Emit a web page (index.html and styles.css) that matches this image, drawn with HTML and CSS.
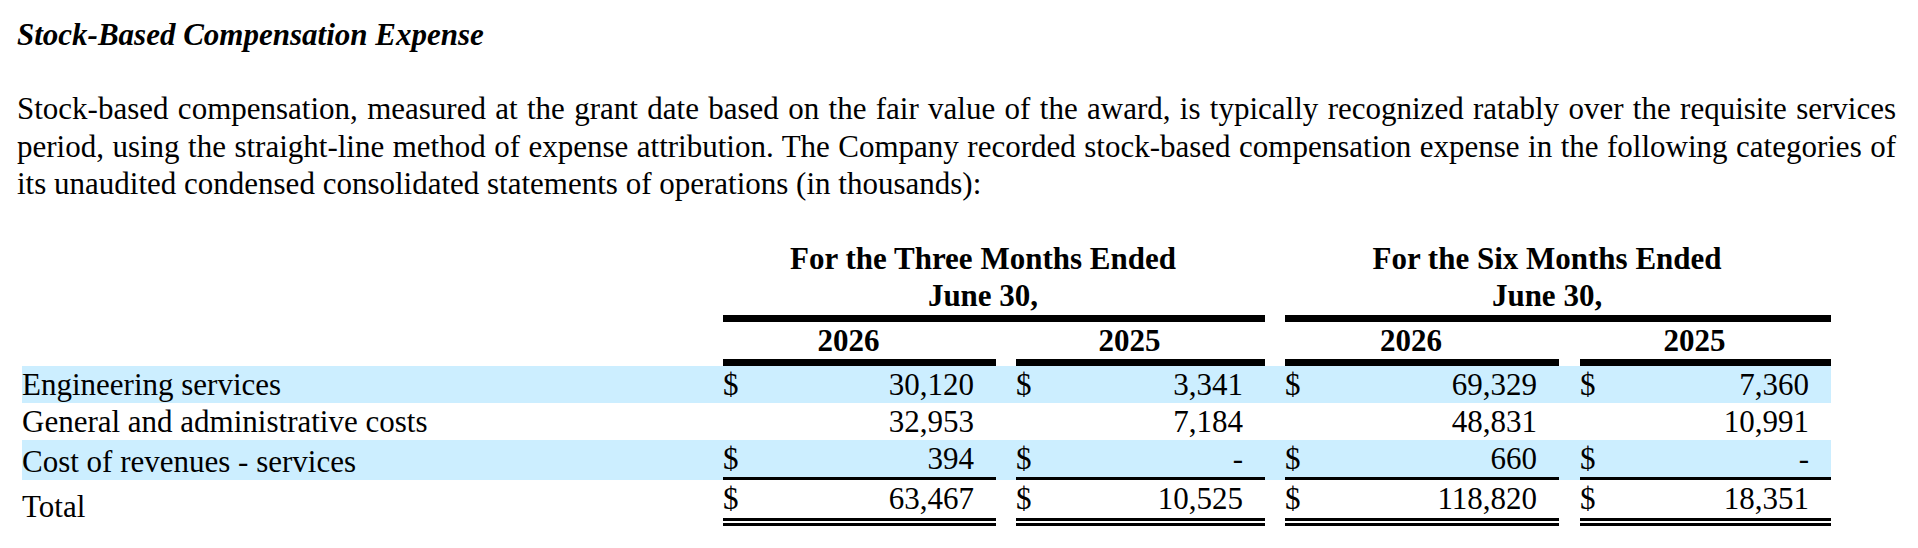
FILE: index.html
```html
<!DOCTYPE html>
<html lang="en">
<head>
<meta charset="utf-8">
<title>Stock-Based Compensation Expense</title>
<link rel="stylesheet" href="styles.css">
</head>
<body>
<div class="page">
  <p class="title">Stock-Based Compensation Expense</p>
  <p class="para">Stock-based compensation, measured at the grant date based on the fair value of the award, is typically recognized ratably over the requisite services period, using the straight-line method of expense attribution. The Company recorded stock-based compensation expense in the following categories of its unaudited condensed consolidated statements of operations (in thousands):</p>
  <table class="sbc">
    <colgroup>
      <col class="c-label">
      <col class="c-a">
      <col class="c-gap">
      <col class="c-b">
      <col class="c-gap">
      <col class="c-c">
      <col class="c-gap2">
      <col class="c-d">
    </colgroup>
    <tbody>
      <tr class="hdr">
        <td></td>
        <td class="period" colspan="3">For the Three Months Ended<br>June 30,</td>
        <td></td>
        <td class="period" colspan="3">For the Six Months Ended<br>June 30,</td>
      </tr>
      <tr class="hdr">
        <td></td>
        <td class="year">2026</td>
        <td></td>
        <td class="year">2025</td>
        <td></td>
        <td class="year">2026</td>
        <td></td>
        <td class="year">2025</td>
      </tr>
      <tr class="shade">
        <td class="label">Engineering services</td>
        <td class="num"><div class="amt"><span>$</span><span>30,120</span></div></td>
        <td></td>
        <td class="num"><div class="amt"><span>$</span><span>3,341</span></div></td>
        <td></td>
        <td class="num"><div class="amt"><span>$</span><span>69,329</span></div></td>
        <td></td>
        <td class="num"><div class="amt"><span>$</span><span>7,360</span></div></td>
      </tr>
      <tr>
        <td class="label">General and administrative costs</td>
        <td class="num"><div class="amt"><span></span><span>32,953</span></div></td>
        <td></td>
        <td class="num"><div class="amt"><span></span><span>7,184</span></div></td>
        <td></td>
        <td class="num"><div class="amt"><span></span><span>48,831</span></div></td>
        <td></td>
        <td class="num"><div class="amt"><span></span><span>10,991</span></div></td>
      </tr>
      <tr class="shade">
        <td class="label">Cost of revenues - services</td>
        <td class="num sub"><div class="amt"><span>$</span><span>394</span></div></td>
        <td></td>
        <td class="num sub"><div class="amt"><span>$</span><span>-</span></div></td>
        <td></td>
        <td class="num sub"><div class="amt"><span>$</span><span>660</span></div></td>
        <td></td>
        <td class="num sub"><div class="amt"><span>$</span><span>-</span></div></td>
      </tr>
      <tr>
        <td class="label">Total</td>
        <td class="num tot"><div class="amt"><span>$</span><span>63,467</span></div></td>
        <td></td>
        <td class="num tot"><div class="amt"><span>$</span><span>10,525</span></div></td>
        <td></td>
        <td class="num tot"><div class="amt"><span>$</span><span>118,820</span></div></td>
        <td></td>
        <td class="num tot"><div class="amt"><span>$</span><span>18,351</span></div></td>
      </tr>
    </tbody>
  </table>
</div>
</body>
</html>
```

FILE: styles.css
```css
html, body {
  margin: 0;
  padding: 0;
  background: #ffffff;
}

body {
  font-family: "Liberation Serif", "Times New Roman", serif;
  font-size: 31px;
  line-height: 37.3px;
  color: #000000;
}

.page {
  padding: 15.5px 22px 0 17px;
}

.title {
  margin: 0 0 37.5px 0;
  font-weight: bold;
  font-style: italic;
}

.para {
  margin: 0 0 38px 0;
  text-align: justify;
}

.sbc {
  margin-left: 5px;
  border-collapse: separate;
  border-spacing: 0;
  table-layout: fixed;
  width: 1809px;
}

.c-label { width: 701px; }
.c-a { width: 273px; }
.c-b { width: 249px; }
.c-c { width: 274px; }
.c-d { width: 251px; }
.c-gap { width: 20px; }
.c-gap2 { width: 21px; }

.sbc td {
  padding: 0;
  vertical-align: bottom;
  line-height: 37.2px;
  white-space: nowrap;
}

.hdr td {
  font-weight: bold;
  text-align: center;
}

.period,
.year {
  padding-right: 22px !important;
  border-bottom: 7px solid #000000;
}

.shade td {
  background: #cceeff;
}

.label {
  text-align: left;
}

.num {
  padding-right: 22px !important;
}

.amt {
  display: flex;
  justify-content: space-between;
}

.sub {
  border-bottom: 3px solid #000000;
}

.tot {
  border-bottom: 8px double #000000;
}
```
